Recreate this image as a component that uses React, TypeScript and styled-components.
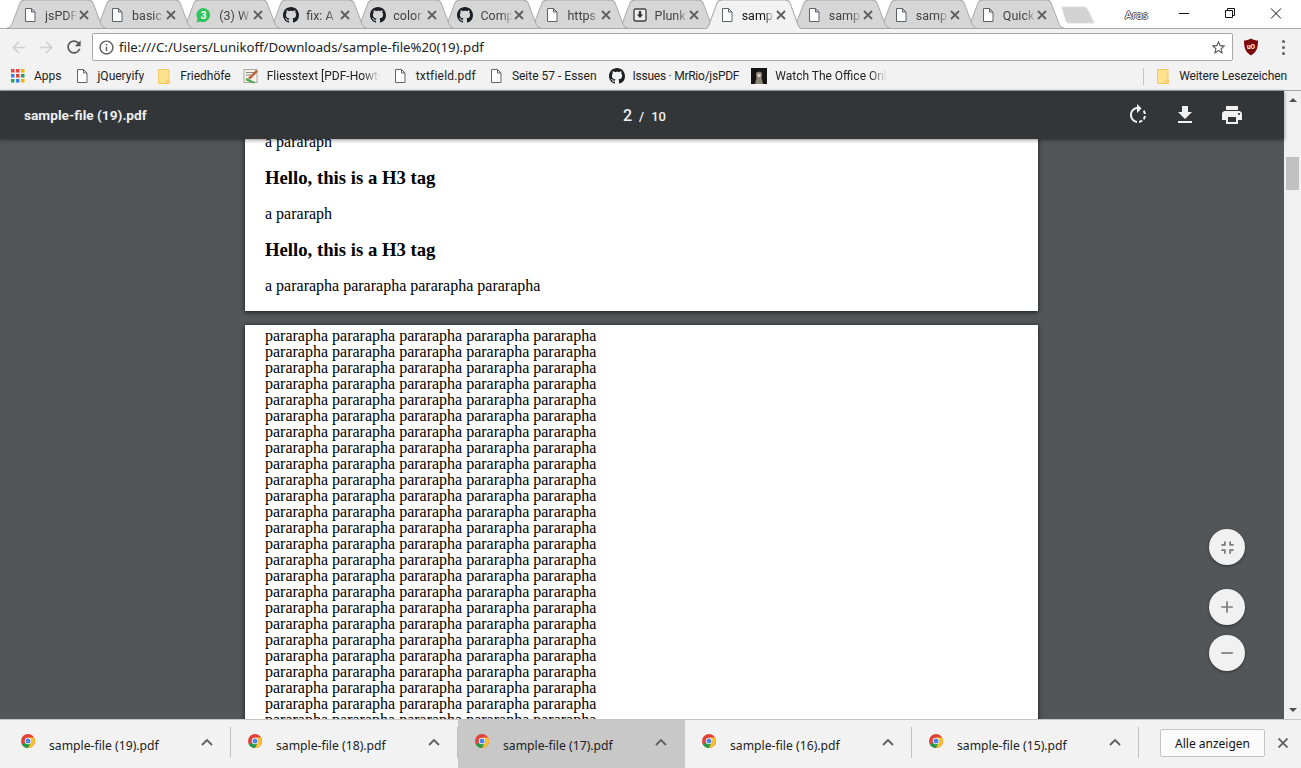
import React from 'react';
import styled, { createGlobalStyle } from 'styled-components';

const uiFont = '"Noto Sans", "Open Sans", sans-serif';

const GlobalStyle = createGlobalStyle`
    html, body {
        margin: 0;
        padding: 0;
        overflow: hidden;
        background: #fff;
    }
`;

const Window = styled.div`
    display: flex;
    flex-direction: column;
    width: 1301px;
    height: 768px;
    overflow: hidden;
    font-family: ${uiFont};
`;

/* tab strip */
const Strip = styled.div`
    display: flex;
    align-items: flex-start;
    box-sizing: border-box;
    height: 29px;
    padding-left: 7px;
    background: #fff;
    border-bottom: 1px solid #a9a9a9;
`;

const Tab = styled.div<{ $active?: boolean; $layer: number }>`
    position: relative;
    flex: none;
    width: 99.09px;
    height: ${(p) => (p.$active ? 29 : 28)}px;
    margin-right: -12px;
    z-index: ${(p) => p.$layer};
    color: ${(p) => (p.$active ? '#111' : '#444')};
`;

const TabShape = styled.svg`
    position: absolute;
    left: 0;
    top: 0;
    width: 100%;
    height: 100%;
`;

const TabInner = styled.div`
    position: relative;
    display: flex;
    align-items: center;
    height: 30px;
    padding-left: 15px;
`;

const TabTitle = styled.div`
    width: 33px;
    margin-left: 7px;
    overflow: hidden;
    white-space: nowrap;
    font-family: Roboto, sans-serif;
    font-size: 12.5px;
    mask-image: linear-gradient(to right, #000 65%, transparent 100%);
`;

const TabClose = styled.svg`
    flex: none;
    width: 10px;
    height: 10px;
    margin-left: 1px;
`;

const NewTab = styled.svg`
    flex: none;
    width: 34px;
    height: 19px;
    margin: 6px 0 0 9px;
`;

const UserName = styled.div`
    flex: none;
    width: 28px;
    margin: 7px 0 0 30px;
    font-size: 11px;
    color: #fff;
    text-shadow: 1px 0 #555, -1px 0 #555, 0 1px #555, 0 -1px #555;
`;

const WindowControls = styled.div`
    display: flex;
    margin-left: auto;
    padding-right: 2px;
`;

const WindowButton = styled.svg`
    display: block;
    width: 46px;
    height: 28px;
`;

/* address row */
const Toolbar = styled.div`
    display: flex;
    align-items: flex-start;
    height: 33px;
    padding: 4px 0 0 4px;
    box-sizing: border-box;
    background: #f2f2f2;
`;

const NavButton = styled.div`
    flex: none;
    display: flex;
    align-items: center;
    justify-content: center;
    width: 28px;
    height: 28px;
`;

const Omnibox = styled.div`
    flex: none;
    display: flex;
    align-items: center;
    box-sizing: border-box;
    width: 1141px;
    height: 28px;
    margin-left: 4px;
    padding: 0 5px 0 5px;
    background: #fff;
    border: 1px solid #a9a9a9;
    border-radius: 2px;
`;

const Url = styled.div`
    flex: 1;
    margin-left: 4px;
    font-size: 13.2px;
    color: #222;
    white-space: nowrap;
`;

const ExtensionSlot = styled.div`
    flex: none;
    display: flex;
    align-items: center;
    justify-content: center;
    width: 36px;
    height: 28px;
`;

const MenuDots = styled.div`
    display: flex;
    flex-direction: column;
    gap: 3px;
    margin-left: -8px;

    & > i {
        display: block;
        width: 3px;
        height: 3px;
        border-radius: 50%;
        background: #5f5f5f;
    }
`;

/* bookmarks */
const Bookmarks = styled.div`
    display: flex;
    align-items: center;
    height: 29px;
    padding: 0 14px 0 11px;
    box-sizing: border-box;
    background: #f2f2f2;
    border-bottom: 1px solid #a3a3a3;
`;

const Bookmark = styled.div<{ $last?: boolean; $spacing?: number }>`
    flex: none;
    display: flex;
    align-items: center;
    gap: 8px;
    margin-right: ${(p) => (p.$last ? 0 : 12)}px;
    font-family: Roboto, sans-serif;
    font-size: 12px;
    letter-spacing: ${(p) => p.$spacing ?? 0}px;
    color: #222;
    white-space: nowrap;
`;

const BookmarkFaded = styled.span<{ $width: number }>`
    display: block;
    width: ${(p) => p.$width}px;
    overflow: hidden;
    mask-image: linear-gradient(to right, #000 85%, transparent 100%);
`;

const BookmarkDivider = styled.div`
    flex: none;
    width: 1px;
    height: 17px;
    margin: 0 11px 0 auto;
    background: #c4c4c4;
`;

/* pdf viewer */
const Main = styled.div`
    flex: 1;
    display: flex;
    min-height: 0;
`;

const Viewer = styled.div`
    position: relative;
    flex: 1;
    display: flex;
    flex-direction: column;
    min-width: 0;
    background: #525659;
`;

const PdfBar = styled.div`
    position: relative;
    z-index: 2;
    flex: none;
    display: grid;
    grid-template-columns: 1fr auto 1fr;
    align-items: center;
    height: 48px;
    padding: 0 40px 0 24px;
    background: #323639;
    box-shadow: 0 1px 4px rgba(0, 0, 0, 0.45);
    color: #f1f1f1;
    font-family: Roboto, sans-serif;
`;

const PdfTitle = styled.div`
    font-size: 13.7px;
    font-weight: 700;
    color: #eee;
`;

const PageCount = styled.div`
    display: flex;
    align-items: baseline;
    gap: 7px;
    margin-left: 21px;
    font-size: 13px;
    font-weight: 500;
`;

const PageCurrent = styled.span`
    font-size: 16px;
`;

const PdfActions = styled.div`
    display: flex;
    justify-content: flex-end;
    gap: 23px;
`;

const Pages = styled.div`
    flex: 1;
    min-height: 0;
    overflow: hidden;
    display: flex;
    flex-direction: column;
    align-items: center;
    gap: 14px;
    padding-right: 1px;
`;

const Page = styled.div<{ $top: number; $bottom: number; $lift?: number }>`
    flex: none;
    box-sizing: border-box;
    width: 793px;
    margin-top: ${(p) => -(p.$lift ?? 0)}px;
    padding: ${(p) => p.$top}px 20px ${(p) => p.$bottom}px;
    background: #fff;
    box-shadow: 0 0 4px rgba(0, 0, 0, 0.5), 0 2px 4px rgba(0, 0, 0, 0.35);
    font-family: "Liberation Serif", serif;
    color: #000;
`;

const Para = styled.p`
    margin: 0;
    font-size: 16px;
    line-height: 16px;
    white-space: nowrap;
`;

const Heading = styled.h3`
    margin: 18px 0;
    font-size: 18.72px;
    line-height: 20px;
    font-weight: 700;
`;

const FloatingButtons = styled.div`
    position: absolute;
    right: 39px;
    bottom: 48px;
    z-index: 1;
    display: flex;
    flex-direction: column;
    gap: 10px;
`;

const RoundButton = styled.div<{ $gapAfter?: number }>`
    display: flex;
    align-items: center;
    justify-content: center;
    width: 36px;
    height: 36px;
    margin-bottom: ${(p) => p.$gapAfter ?? 0}px;
    border-radius: 50%;
    background: #f1f1f1;
    box-shadow: 0 1px 3px rgba(0, 0, 0, 0.4);
`;

const Scrollbar = styled.div`
    flex: none;
    display: flex;
    flex-direction: column;
    align-items: center;
    justify-content: space-between;
    width: 17px;
    background: #f1f1f1;
`;

const ScrollArrow = styled.div<{ $down?: boolean }>`
    width: 0;
    height: 0;
    margin: ${(p) => (p.$down ? '0 0 7px' : '7px 0 0')};
    border-left: 4px solid transparent;
    border-right: 4px solid transparent;
    border-${(p) => (p.$down ? 'top' : 'bottom')}: 4px solid #505050;
`;

const ScrollThumb = styled.div`
    width: 13px;
    height: 33px;
    margin-top: 55px;
    margin-bottom: auto;
    background: #c1c1c1;
`;

/* downloads shelf */
const Shelf = styled.div`
    flex: none;
    display: flex;
    align-items: stretch;
    box-sizing: border-box;
    height: 49px;
    padding-left: 4px;
    background: #f2f2f2;
    border-top: 1px solid #c6c6c6;
`;

const DownloadItem = styled.div<{ $hover?: boolean }>`
    flex: none;
    display: flex;
    box-sizing: border-box;
    align-items: center;
    position: relative;
    width: 227px;
    padding-left: 17px;
    background: ${(p) => (p.$hover ? '#c8c8c8' : 'transparent')};
    &::after {
        content: '';
        position: absolute;
        right: 0;
        top: 7px;
        bottom: 10px;
        width: 1px;
        background: ${(p) => (p.$hover ? 'transparent' : '#c0c0c0')};
    }
`;

const ChromeIcon = styled.svg`
    flex: none;
    width: 14px;
    height: 14px;
    margin-top: -6px;
`;

const DownloadName = styled.div`
    flex: 1;
    margin: 3px 0 0 14px;
    font-size: 12.2px;
    color: #222;
    white-space: nowrap;
`;

const Chevron = styled.svg`
    flex: none;
    width: 12px;
    height: 8px;
    margin: -4px 18px 0 0;
`;

const ShowAll = styled.div`
    flex: none;
    display: flex;
    align-items: center;
    justify-content: center;
    box-sizing: border-box;
    width: 105px;
    height: 28px;
    margin: 9px 0 0 21px;
    background: #fbfbfb;
    border: 1px solid #c4c4c4;
    border-radius: 2px;
    font-size: 12px;
    color: #111;
`;

const ShelfClose = styled.svg`
    flex: none;
    width: 10px;
    height: 10px;
    margin: 18px 0 0 13px;
`;

const Mdi = ({ d, size, color, vb = 24 }: { d: string; size: number; color: string; vb?: number }) => (
    <svg width={size} height={size} viewBox={`0 0 ${vb} ${vb}`} style={{ display: 'block', flex: 'none' }}>
        <path d={d} fill={color} />
    </svg>
);

const octicon = 'M8 0C3.58 0 0 3.58 0 8c0 3.54 2.29 6.53 5.47 7.59.4.07.55-.17.55-.38 0-.19-.01-.82-.01-1.49-2.01.37-2.53-.49-2.69-.94-.09-.23-.48-.94-.82-1.13-.28-.15-.68-.52-.01-.53.63-.01 1.08.58 1.23.82.72 1.21 1.87.87 2.33.66.07-.52.28-.87.51-1.07-1.78-.2-3.64-.89-3.64-3.95 0-.87.31-1.59.82-2.15-.08-.2-.36-1.02.08-2.12 0 0 .67-.21 2.2.82.64-.18 1.32-.27 2-.27.68 0 1.36.09 2 .27 1.53-1.04 2.2-.82 2.2-.82.44 1.1.16 1.92.08 2.12.51.56.82 1.27.82 2.15 0 3.07-1.87 3.75-3.65 3.95.29.25.54.73.54 1.48 0 1.07-.01 1.93-.01 2.2 0 .21.15.46.55.38A8.013 8.013 0 0016 8c0-4.42-3.58-8-8-8z';

const paths = {
    back: 'M20 11H7.83l5.59-5.59L12 4l-8 8 8 8 1.41-1.41L7.83 13H20v-2z',
    forward: 'M12 4l-1.41 1.41L16.17 11H4v2h12.17l-5.58 5.59L12 20l8-8z',
    reload: 'M17.65 6.35C16.2 4.9 14.21 4 12 4c-4.42 0-7.99 3.58-7.99 8s3.57 8 7.99 8c3.73 0 6.84-2.55 7.73-6h-2.08c-.82 2.33-3.04 4-5.65 4-3.31 0-6-2.69-6-6s2.69-6 6-6c1.66 0 3.14.69 4.22 1.78L13 11h7V4l-2.35 2.35z',
    info: 'M11 7h2v2h-2zm0 4h2v6h-2zm1-9C6.48 2 2 6.48 2 12s4.48 10 10 10 10-4.48 10-10S17.52 2 12 2zm0 18c-4.41 0-8-3.59-8-8s3.59-8 8-8 8 3.59 8 8-3.59 8-8 8z',
    star: 'M22 9.24l-7.19-.62L12 2 9.19 8.63 2 9.24l5.46 4.73L5.82 21 12 17.27 18.18 21l-1.64-7.03L22 9.24zM12 15.4l-3.76 2.27 1-4.28-3.32-2.88 4.38-.38L12 6.1l1.71 4.04 4.38.38-3.32 2.88 1 4.28L12 15.4z',
    rotate: 'M15.55 5.55L11 1v3.07C7.06 4.56 4 7.92 4 12s3.05 7.44 7 7.93v-2.02c-2.84-.48-5-2.94-5-5.91s2.16-5.43 5-5.91V10l4.55-4.45zM19.93 11c-.17-1.39-.72-2.73-1.62-3.89l-1.42 1.42c.54.75.88 1.6 1.02 2.47h2.02zM13 17.9v2.02c1.39-.17 2.74-.71 3.9-1.61l-1.44-1.44c-.75.54-1.59.89-2.46 1.03zm3.89-2.42l1.42 1.41c.9-1.16 1.45-2.5 1.62-3.89h-2.02c-.14.87-.48 1.72-1.02 2.48z',
    download: 'M19 9h-4V3H9v6H5l7 7 7-7zM5 18v2h14v-2H5z',
    print: 'M19 8H5c-1.66 0-3 1.34-3 3v6h4v4h12v-4h4v-6c0-1.66-1.34-3-3-3zm-3 11H8v-5h8v5zm3-7c-.55 0-1-.45-1-1s.45-1 1-1 1 .45 1 1-.45 1-1 1zm-1-9H6v4h12V3z',
    fit: 'M5 16h3v3h2v-5H5v2zm3-8H5v2h5V5H8v3zm6 11h2v-3h3v-2h-5v5zm2-11V5h-2v5h5V8h-3z',
    plus: 'M19 13h-6v6h-2v-6H5v-2h6V5h2v6h6v2z',
    minus: 'M19 13H5v-2h14v2z',
};

const FileIcon = () => (
    <svg width="16" height="16" viewBox="0 0 16 16" style={{ display: 'block', flex: 'none' }}>
        <path d="M3.5 1.5h6l3.5 3.5v9.5h-9.5zM9.5 1.5v3.5h3.5" fill="#fff" stroke="#5f6368" />
    </svg>
);

const GithubIcon = () => <Mdi d={octicon} size={16} vb={16} color="#1b1f23" />;

const WhatsappIcon = () => (
    <svg width="17" height="17" viewBox="0 0 17 17" style={{ display: 'block', flex: 'none', marginLeft: -1 }}>
        <path d="M8.5 1a7 7 0 0 0-6 10.6L1.4 15.6l4.1-1.1A7 7 0 1 0 8.5 1z" fill="#2fc45a" />
        <text x="8.6" y="12" textAnchor="middle" fontSize="10" fontWeight="700" fill="#fff" fontFamily="Roboto, sans-serif">3</text>
    </svg>
);

const PlunkIcon = () => (
    <svg width="16" height="16" viewBox="0 0 16 16" style={{ display: 'block', flex: 'none' }}>
        <rect x="2" y="2" width="12" height="12" rx="1.5" fill="#eee" stroke="#444" strokeWidth="1.4" />
        <path d="M6.8 4h2.4v3.5h2L8 11 4.8 7.5h2z" fill="#333" />
    </svg>
);

const FolderIcon = () => (
    <svg width="12" height="15" viewBox="0 0 12 15" style={{ display: 'block', flex: 'none', margin: '0 2px' }}>
        <path d="M.5.5h10.500v14H.5z" fill="#fde28e" stroke="#f0c869" />
        <rect x="8.5" y="11" width="3" height="3.5" fill="#fbd774" stroke="#e9bc59" strokeWidth=".5" />
    </svg>
);

const AppsIcon = () => {
    const colors = ['#e8453c', '#e8453c', '#f6b400', '#3f7fe8', '#e8453c', '#30a24f', '#30a24f', '#3f7fe8', '#f6b400'];
    return (
        <svg width="14" height="14" viewBox="0 0 14 14" style={{ display: 'block', flex: 'none', marginRight: 1 }}>
            {colors.map((c, i) => (
                <rect key={i} x={(i % 3) * 5} y={Math.floor(i / 3) * 5} width="3.5" height="3.5" fill={c} />
            ))}
        </svg>
    );
};

const NoteIcon = () => (
    <svg width="16" height="16" viewBox="0 0 16 16" style={{ display: 'block', flex: 'none' }}>
        <rect x="1" y="1.5" width="13" height="13" fill="#f5f1e4" stroke="#a8a8a0" />
        <path d="M3 4.5h8M3 7h5" stroke="#888" />
        <path d="M5 10l8-8 2 1.5-8 8z" fill="#c0603a" />
        <path d="M3 10l9 4-1 1.5-8-3z" fill="#49a84e" />
    </svg>
);

const OfficeThumb = () => (
    <svg width="16" height="16" viewBox="0 0 16 16" style={{ display: 'block', flex: 'none' }}>
        <rect width="16" height="16" fill="#141414" />
        <path d="M5 5.5C5 3 11 3 11 5.5L10.5 10 12 16H4l1.5-6z" fill="#8d8478" />
        <rect x="6.5" y="6" width="3" height="3" fill="#d9d2c4" />
    </svg>
);

const UblockIcon = () => (
    <svg width="16" height="18" viewBox="0 0 16 18" style={{ display: 'block' }}>
        <path d="M8 .5C5.5 2 3 2.5 1 2.5 1 9 2 14 8 17.5 14 14 15 9 15 2.5 13 2.5 10.5 2 8 .5z" fill="#7f0a0c" />
        <text x="8" y="10.5" textAnchor="middle" fontSize="6.5" fontWeight="700" fill="#fff" fontFamily="Roboto, sans-serif">uO</text>
    </svg>
);

const ChromeLogo = () => (
    <ChromeIcon viewBox="0 0 28 28">
        <circle cx="14" cy="14" r="14" fill="#de4437" />
        <path d="M14 14L1.9 21A14 14 0 0 0 14 28l7-14z" fill="#1f9e4a" />
        <path d="M14 28A14 14 0 0 0 26.1 7H14l7 7z" fill="#fbc02d" />
        <circle cx="14" cy="14" r="6.5" fill="#fff" />
        <circle cx="14" cy="14" r="5" fill="#4a86e8" />
    </ChromeIcon>
);

const tabs: { title: string; icon: React.ReactNode; active?: boolean }[] = [
    { title: 'jsPDF', icon: <FileIcon /> },
    { title: 'basic', icon: <FileIcon /> },
    { title: '(3) W', icon: <WhatsappIcon /> },
    { title: 'fix: A', icon: <GithubIcon /> },
    { title: 'color', icon: <GithubIcon /> },
    { title: 'Comp', icon: <GithubIcon /> },
    { title: 'https', icon: <FileIcon /> },
    { title: 'Plunk', icon: <PlunkIcon /> },
    { title: 'samp', icon: <FileIcon />, active: true },
    { title: 'samp', icon: <FileIcon /> },
    { title: 'samp', icon: <FileIcon /> },
    { title: 'Quick', icon: <FileIcon /> },
];

const downloads = ['sample-file (19).pdf', 'sample-file (18).pdf', 'sample-file (17).pdf', 'sample-file (16).pdf', 'sample-file (15).pdf'];

const bodyLine = 'pararapha pararapha pararapha pararapha pararapha';
const bodyLines = Array.from({ length: 25 }, () => bodyLine);

const tabPath = 'M0 29C3 29 4 27 5 25L13 3C14 1 15 0 18 0H81C84 0 85 1 86 3L94 25C95 27 96 29 99 29';

const App: React.FC = () => (
    <Window>
        <GlobalStyle />
        <Strip>
            {tabs.map(({ title, icon, active }, i) => (
                <Tab key={i} $active={active} $layer={active ? 50 : 30 - i}>
                    <TabShape viewBox="0 0 99 29" preserveAspectRatio="none">
                        <path d={tabPath} fill={active ? '#f2f2f2' : '#d6d6d6'} stroke="#a9a9a9" />
                    </TabShape>
                    <TabInner>
                        {icon}
                        <TabTitle>{title}</TabTitle>
                        <TabClose viewBox="0 0 10 10">
                            <path d="M1 1l8 8M9 1l-8 8" stroke="#5f5f5f" strokeWidth="1.8" />
                        </TabClose>
                    </TabInner>
                </Tab>
            ))}
            <NewTab viewBox="0 0 34 19">
                <path d="M1 1H23C25 1 25.5 2 26.5 3.5L33 17H8C6 17 5.5 16 5 15z" fill="#d2d2d2" stroke="#dcdcdc" />
            </NewTab>
            <UserName>Aras</UserName>
            <WindowControls>
                <WindowButton viewBox="0 0 46 28">
                    <path d="M18 13.5h10" stroke="#111" />
                </WindowButton>
                <WindowButton viewBox="0 0 46 28">
                    <path d="M18.5 10.5h7v7h-7zM20.5 10.5v-2h7v7h-2" fill="none" stroke="#111" />
                </WindowButton>
                <WindowButton viewBox="0 0 46 28">
                    <path d="M18 8.5l10 10M28 8.5l-10 10" stroke="#111" />
                </WindowButton>
            </WindowControls>
        </Strip>

        <Toolbar>
            <NavButton><Mdi d={paths.back} size={19} color="#d0d0d0" /></NavButton>
            <NavButton><Mdi d={paths.forward} size={19} color="#d0d0d0" /></NavButton>
            <NavButton><Mdi d={paths.reload} size={20} color="#5a5a5a" /></NavButton>
            <Omnibox>
                <Mdi d={paths.info} size={17} color="#5a5a5a" />
                <Url>file:///C:/Users/Lunikoff/Downloads/sample-file%20(19).pdf</Url>
                <Mdi d={paths.star} size={17} color="#5a5a5a" />
            </Omnibox>
            <ExtensionSlot><UblockIcon /></ExtensionSlot>
            <ExtensionSlot>
                <MenuDots><i /><i /><i /></MenuDots>
            </ExtensionSlot>
        </Toolbar>

        <Bookmarks>
            <Bookmark><AppsIcon />Apps</Bookmark>
            <Bookmark><FileIcon />jQueryify</Bookmark>
            <Bookmark><FolderIcon />Friedhöfe</Bookmark>
            <Bookmark><NoteIcon /><BookmarkFaded $width={113}>Fliesstext [PDF-Howto</BookmarkFaded></Bookmark>
            <Bookmark $spacing={0.2}><FileIcon />txtfield.pdf</Bookmark>
            <Bookmark><FileIcon />Seite 57 - Essen</Bookmark>
            <Bookmark $spacing={-0.25}><GithubIcon />Issues · MrRio/jsPDF</Bookmark>
            <Bookmark><OfficeThumb /><BookmarkFaded $width={112}>Watch The Office Onl</BookmarkFaded></Bookmark>
            <BookmarkDivider />
            <Bookmark $last $spacing={-0.1}><FolderIcon />Weitere Lesezeichen</Bookmark>
        </Bookmarks>

        <Main>
            <Viewer>
                <PdfBar>
                    <PdfTitle>sample-file (19).pdf</PdfTitle>
                    <PageCount>
                        <PageCurrent>2</PageCurrent>
                        <span>/</span>
                        <span>10</span>
                    </PageCount>
                    <PdfActions>
                        <Mdi d={paths.rotate} size={24} color="#f1f1f1" />
                        <Mdi d={paths.download} size={24} color="#f1f1f1" />
                        <Mdi d={paths.print} size={24} color="#f1f1f1" />
                    </PdfActions>
                </PdfBar>
                <Pages>
                    <Page $top={0} $bottom={17} $lift={5}>
                        <Para>a pararaph</Para>
                        <Heading>Hello, this is a H3 tag</Heading>
                        <Para>a pararaph</Para>
                        <Heading>Hello, this is a H3 tag</Heading>
                        <Para>a pararapha pararapha pararapha pararapha</Para>
                    </Page>
                    <Page $top={3} $bottom={0}>
                        {bodyLines.map((line, i) => (
                            <Para key={i}>{line}</Para>
                        ))}
                    </Page>
                </Pages>
                <FloatingButtons>
                    <RoundButton $gapAfter={14}><Mdi d={paths.fit} size={21} color="#7a7a7a" /></RoundButton>
                    <RoundButton><Mdi d={paths.plus} size={20} color="#7a7a7a" /></RoundButton>
                    <RoundButton><Mdi d={paths.minus} size={20} color="#7a7a7a" /></RoundButton>
                </FloatingButtons>
            </Viewer>
            <Scrollbar>
                <ScrollArrow />
                <ScrollThumb />
                <ScrollArrow $down />
            </Scrollbar>
        </Main>

        <Shelf>
            {downloads.map((name, i) => (
                <DownloadItem key={name} $hover={i === 2}>
                    <ChromeLogo />
                    <DownloadName>{name}</DownloadName>
                    <Chevron viewBox="0 0 12 8">
                        <path d="M1 7l5-5 5 5" fill="none" stroke="#5f5f5f" strokeWidth="1.8" />
                    </Chevron>
                </DownloadItem>
            ))}
            <ShowAll>Alle anzeigen</ShowAll>
            <ShelfClose viewBox="0 0 10 10">
                <path d="M0.5 0.5l9 9M9.5 0.5l-9 9" stroke="#5f5f5f" strokeWidth="1.8" />
            </ShelfClose>
        </Shelf>
    </Window>
);

export default App;
